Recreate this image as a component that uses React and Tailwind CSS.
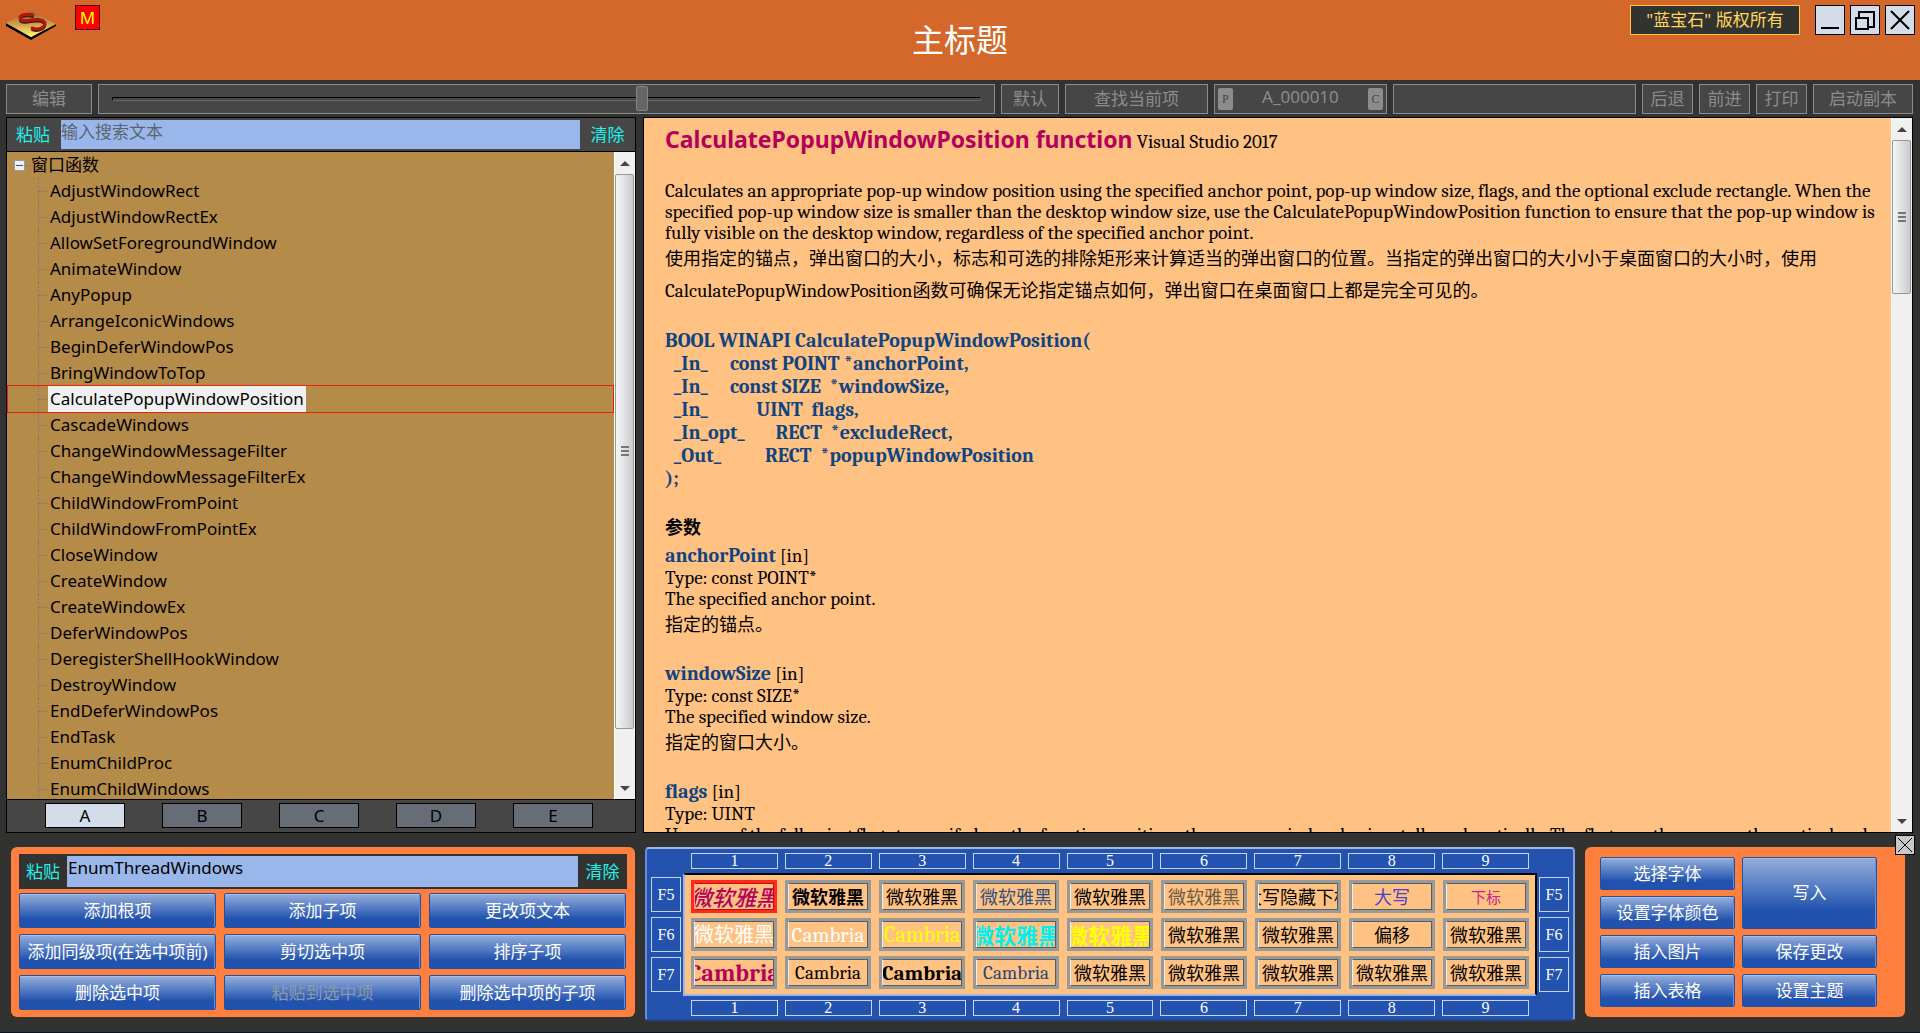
import { useState } from "react";
import clsx from "clsx";

const SANS = "font-['Noto_Sans','Noto_Sans_CJK_SC',sans-serif]";
const SERIF = "font-['Cambria','Caladea','Liberation_Serif','Noto_Sans_CJK_SC',serif]";

const functions = [
  "AdjustWindowRect",
  "AdjustWindowRectEx",
  "AllowSetForegroundWindow",
  "AnimateWindow",
  "AnyPopup",
  "ArrangeIconicWindows",
  "BeginDeferWindowPos",
  "BringWindowToTop",
  "CalculatePopupWindowPosition",
  "CascadeWindows",
  "ChangeWindowMessageFilter",
  "ChangeWindowMessageFilterEx",
  "ChildWindowFromPoint",
  "ChildWindowFromPointEx",
  "CloseWindow",
  "CreateWindow",
  "CreateWindowEx",
  "DeferWindowPos",
  "DeregisterShellHookWindow",
  "DestroyWindow",
  "EndDeferWindowPos",
  "EndTask",
  "EnumChildProc",
  "EnumChildWindows",
];

const code = `BOOL WINAPI CalculatePopupWindowPosition(
  _In_     const POINT *anchorPoint,
  _In_     const SIZE  *windowSize,
  _In_           UINT  flags,
  _In_opt_       RECT  *excludeRect,
  _Out_          RECT  *popupWindowPosition
);`;

const params = [
  { name: "anchorPoint", type: "const POINT*", en: "The specified anchor point.", zh: "指定的锚点。" },
  { name: "windowSize", type: "const SIZE*", en: "The specified window size.", zh: "指定的窗口大小。" },
];

const Y = "微软雅黑";
const styleRows = [
  [
    { t: Y, c: "text-[22px] font-medium italic text-[#b4005a]", active: true },
    { t: Y, c: "font-bold" },
    { t: Y },
    { t: Y, c: "text-[#2f4f7f]" },
    { t: Y },
    { t: Y, c: "text-[#6b5a44]" },
    { t: "大写隐藏下标" },
    { t: "大写", c: "text-[#4a3fd0]" },
    { t: "下标", c: "text-[15px] text-[#d0208c]" },
  ],
  [
    { t: Y, c: "text-[20px] text-white" },
    { t: "Cambria", c: "text-[21px] text-white" },
    { t: "Cambria", c: "text-[22px] text-[#ffff00]" },
    { t: Y, c: "text-[22px] font-bold text-[#00f0f0]" },
    { t: Y, c: "text-[22px] font-bold text-[#ffff00]" },
    { t: Y },
    { t: Y },
    { t: "偏移" },
    { t: Y },
  ],
  [
    { t: "Cambria", c: "text-[24px] font-bold text-[#b4005a]" },
    { t: "Cambria", c: "text-[19px]" },
    { t: "Cambria", c: "text-[21px] font-bold" },
    { t: "Cambria", c: "text-[19px] text-[#1f497d]" },
    { t: Y },
    { t: Y },
    { t: Y },
    { t: Y },
    { t: Y },
  ],
];

const SNAKE = "M27 4 C21 2 13 4 14 7.5 C15 12 24 8 32 8.5 C39 9 41 13 37 16 C34 18 30 18.5 26 17";

const Logo = () => (
  <svg viewBox="0 0 50 30" className="h-[30px] w-[50px]" aria-hidden="true">
    <defs>
      <linearGradient id="gold" x1="0" y1="0" x2="0" y2="1">
        <stop offset="0" stopColor="#8f6a32" />
        <stop offset="0.5" stopColor="#d29c4c" />
        <stop offset="1" stopColor="#ffff6a" />
      </linearGradient>
    </defs>
    <path d="M0 12 L25 26 L50 13 V15 L25 29 L0 15 Z" fill="#000" />
    <path d="M25 0 L50 13 L25 26 L0 12 Z" fill="url(#gold)" />
    <path d={SNAKE} transform="translate(0 2)" fill="none" stroke="#4a1c0a" strokeWidth="2" strokeLinecap="round" />
    <path d={SNAKE} fill="none" stroke="#b3160e" strokeWidth="3" strokeLinecap="round" />
  </svg>
);

const WindowButton = ({ label, children }) => (
  <button aria-label={label} className="size-[30px] border border-black bg-[#d4dbe9]">
    <svg viewBox="0 0 28 28" className="size-7" fill="none" stroke="#000" strokeWidth="2">
      {children}
    </svg>
  </button>
);

const ToolButton = ({ children, className }) => (
  <button
    className={clsx("shrink-0 border border-[#8c8c8c] bg-[#464646] text-[17px] text-[#8c8c8c]", className)}
  >
    {children}
  </button>
);

const ScrollBar = ({ thumb }) => (
  <div className="flex w-[21px] shrink-0 flex-col border-l border-white bg-[#f0f0f0]">
    <button aria-label="向上" className="flex h-[22px] shrink-0 items-center justify-center">
      <svg viewBox="0 0 10 5" className="h-[5px] w-[10px]"><path d="M5 0 L10 5 H0 Z" fill="#444" /></svg>
    </button>
    <div className="min-h-0 flex-1 pr-px">
      <div
        className={clsx(
          "flex flex-col items-center justify-center gap-[2px] rounded-xs border border-[#979797] bg-linear-to-r from-[#f5f5f5] via-[#e0e1e3] to-[#c9cbcf]",
          thumb
        )}
      >
        <i className="h-[2px] w-2 bg-[#777]" />
        <i className="h-[2px] w-2 bg-[#777]" />
        <i className="h-[2px] w-2 bg-[#777]" />
      </div>
    </div>
    <button aria-label="向下" className="flex h-[22px] shrink-0 items-center justify-center">
      <svg viewBox="0 0 10 5" className="h-[5px] w-[10px]"><path d="M5 5 L10 0 H0 Z" fill="#444" /></svg>
    </button>
  </div>
);

const BlueButton = ({ children, className, disabled }) => (
  <button
    disabled={disabled}
    className={clsx(
      "min-w-0 rounded-xs border border-[#2450a0] bg-linear-to-b from-[#8ea8d8] from-5% to-[#2152ae] to-75% text-[17px] whitespace-nowrap shadow-[inset_0_1px_0_#a9bfe6,inset_-1px_0_0_#5f8fdc]",
      disabled ? "text-[#8d97ab]" : "text-white",
      className
    )}
  >
    {children}
  </button>
);

const Header = () => (
  <header className="grid h-20 shrink-0 grid-cols-[1fr_auto_1fr] bg-[#d4682a] px-[5px] pt-[5px]">
    <div className="flex items-start pl-px">
      <div className="pt-[6px]">
        <Logo />
      </div>
      <button className="ml-[19px] h-[25px] w-[25px] border border-[#400] bg-[#ff0000] text-[17px] leading-[23px] text-[#ffff00]">
        M
      </button>
    </div>
    <h1 className="pt-[11px] text-[32px] leading-[48px] text-white">主标题</h1>
    <div className="flex items-start justify-end gap-[5px]">
      <p className="mr-[10px] h-[30px] w-[170px] border border-[#ffc83c] bg-[#323230] text-center text-[17px] leading-7 text-[#ffd75a]">
        "蓝宝石" 版权所有
      </p>
      <WindowButton label="最小化">
        <path d="M5 22 H23" />
      </WindowButton>
      <WindowButton label="还原">
        <path d="M8 11 V6 H23 V21 H18 M5 12 H17 V23 H5 Z" />
      </WindowButton>
      <WindowButton label="关闭">
        <path d="M5 5 L23 23 M23 5 L5 23" />
      </WindowButton>
    </div>
  </header>
);

const Toolbar = () => {
  const [zoom, setZoom] = useState(612);

  return (
    <div className="flex h-[30px] shrink-0 gap-1.5 pr-[7px] pl-1.5">
      <ToolButton className="w-[86px]">编辑</ToolButton>
      <div className="flex min-w-0 flex-[876] items-center border border-[#8c8c8c] bg-[#464646] px-[13px]">
        <input
          type="range"
          aria-label="缩放"
          min="0"
          max="1000"
          value={zoom}
          onChange={(e) => setZoom(e.target.value)}
          className="h-[25px] w-full appearance-none bg-transparent [&::-webkit-slider-runnable-track]:h-1 [&::-webkit-slider-runnable-track]:border [&::-webkit-slider-runnable-track]:border-[#666] [&::-webkit-slider-runnable-track]:border-t-black [&::-webkit-slider-runnable-track]:border-l-black [&::-webkit-slider-thumb]:-mt-3 [&::-webkit-slider-thumb]:h-[25px] [&::-webkit-slider-thumb]:w-3 [&::-webkit-slider-thumb]:appearance-none [&::-webkit-slider-thumb]:rounded-xs [&::-webkit-slider-thumb]:border [&::-webkit-slider-thumb]:border-[#858585] [&::-webkit-slider-thumb]:bg-[#666]"
        />
      </div>
      <ToolButton className="w-[58px]">默认</ToolButton>
      <ToolButton className="w-[143px]">查找当前项</ToolButton>
      <div className="flex w-[173px] shrink-0 items-center justify-between border border-[#8c8c8c] bg-[#464646] px-[3px] text-[#8c8c8c]">
        <button className="h-[22px] w-[15px] rounded-xs bg-[#8c8c8c] font-['Liberation_Serif',serif] text-xs text-[#464646]">
          P
        </button>
        <span className="pb-1 text-[17px] leading-6">A_000010</span>
        <button className="h-[22px] w-[15px] rounded-xs bg-[#8c8c8c] font-['Liberation_Serif',serif] text-xs text-[#464646]">
          C
        </button>
      </div>
      <div className="min-w-0 flex-[243] border border-[#8c8c8c] bg-[#464646]" />
      <ToolButton className="w-[51px]">后退</ToolButton>
      <ToolButton className="w-[51px]">前进</ToolButton>
      <ToolButton className="w-[51px]">打印</ToolButton>
      <ToolButton className="w-[100px]">启动副本</ToolButton>
    </div>
  );
};

const TreePanel = () => {
  const [selected, setSelected] = useState("CalculatePopupWindowPosition");
  const [tab, setTab] = useState("A");

  return (
    <section className="flex min-h-0 flex-col border border-black bg-[#464646]">
      {/* Search */}
      <div className="flex h-[34px] shrink-0 items-center border-b border-black text-[17px] text-[#20f0e8]">
        <button className="w-[54px] shrink-0 pr-[2px]">粘贴</button>
        <input
          aria-label="搜索"
          placeholder="输入搜索文本"
          className="h-[29px] min-w-0 flex-1 bg-[#99b7ea] pb-1.5 text-black placeholder:text-[#5c6470]"
        />
        <button className="w-[55px] shrink-0">清除</button>
      </div>

      {/* Tree */}
      <div className="flex min-h-0 flex-1 bg-[#b58b4a] text-[17px]">
        <ul className="min-w-0 flex-1 overflow-hidden px-px text-black">
          <li>
            <button className="flex h-[26px] items-center pl-[6px]">
              <i className="flex size-[11px] items-center justify-center border border-[#9a9a9a] bg-[#f0f0f0]">
                <i className="h-px w-[7px] bg-[#3050a0]" />
              </i>
              <i className="mr-[2px] w-1 border-t border-dotted border-[#777]" />
              <span>窗口函数</span>
            </button>
            <ul>
              {functions.map((name) => (
                <li key={name}>
                  <button
                    onClick={() => setSelected(name)}
                    className={clsx(
                      "relative flex h-[26px] w-full pl-[30px]",
                      selected === name && "z-10 outline-1 outline-[#e8200a]"
                    )}
                  >
                    <span className="flex h-full w-[10px] items-center border-l border-dotted border-[#777]">
                      <i className="w-2 border-t border-dotted border-[#777]" />
                    </span>
                    <span className={clsx("px-[2px] leading-[26px]", selected === name && "bg-[#f0f0f0]")}>
                      {name}
                    </span>
                  </button>
                </li>
              ))}
            </ul>
          </li>
        </ul>
        <ScrollBar thumb="h-[92%]" />
      </div>

      {/* Pages */}
      <div className="flex h-[33px] shrink-0 justify-between border-t border-black pt-[3px] pr-[42px] pl-[38px]">
        {["A", "B", "C", "D", "E"].map((t) => (
          <button
            key={t}
            onClick={() => setTab(t)}
            className={clsx(
              "h-[25px] w-20 border border-black text-[17px] leading-[23px] text-black",
              tab === t ? "bg-[#d4dbe9]" : "bg-[#666d77]"
            )}
          >
            {t}
          </button>
        ))}
      </div>
    </section>
  );
};

const DocPanel = () => (
  <section className="flex min-h-0 border border-black bg-[#ffc282] text-black">
    <article className={clsx("min-w-0 flex-1 overflow-hidden pr-[10px] pl-[21px] text-[19px] leading-[21px]", SERIF)}>
      <h2 className="mb-[21px] h-[42px] leading-[48px]">
        <span className="font-['Noto_Sans',sans-serif] text-[23px] leading-none font-bold text-[#b4005a]">
          CalculatePopupWindowPosition function
        </span>{" "}
        Visual Studio 2017
      </h2>
      <p>
        Calculates an appropriate pop-up window position using the specified anchor point, pop-up window size, flags,
        and the optional exclude rectangle. When the specified pop-up window size is smaller than the desktop window
        size, use the CalculatePopupWindowPosition function to ensure that the pop-up window is fully visible on the
        desktop window, regardless of the specified anchor point.
      </p>
      <p className="mb-[21px] text-[18px] leading-8">
        使用指定的锚点，弹出窗口的大小，标志和可选的排除矩形来计算适当的弹出窗口的位置。当指定的弹出窗口的大小小于桌面窗口的大小时，使用
        <span className="text-[19px] leading-none">CalculatePopupWindowPosition</span>
        函数可确保无论指定锚点如何，弹出窗口在桌面窗口上都是完全可见的。
      </p>
      <pre className={clsx("mb-[23px] text-[20px] leading-[23px] font-bold text-[#0f4480]", SERIF)}>{code}</pre>
      <h3 className="text-[18px] leading-8 font-bold">参数</h3>
      {params.map((p) => (
        <div key={p.name} className="mb-[21px]">
          <h4 className="leading-[23px]">
            <span className="text-[20px] leading-none font-bold text-[#0f4480]">{p.name}</span> [in]
          </h4>
          <p>Type: {p.type}</p>
          <p>{p.en}</p>
          <p className="text-[18px] leading-8">{p.zh}</p>
        </div>
      ))}
      <h4 className="leading-[23px]">
        <span className="text-[20px] leading-none font-bold text-[#0f4480]">flags</span> [in]
      </h4>
      <p>Type: UINT</p>
      <p>
        Use one of the following flags to specify how the function positions the pop-up window horizontally and
        vertically. The flags are the same as the vertical and
      </p>
    </article>
    <ScrollBar thumb="h-[23%]" />
  </section>
);

const EditPanel = () => {
  const [text, setText] = useState("EnumThreadWindows");

  return (
    <section className="h-[170px] rounded-md bg-[#ff803e] px-2 pt-[7px]">
      <div className="mb-1 flex h-[35px] items-center bg-[#323230] text-[17px] text-[#20f0e8]">
        <button className="w-12 shrink-0">粘贴</button>
        <input
          aria-label="项文本"
          value={text}
          onChange={(e) => setText(e.target.value)}
          className="h-[31px] min-w-0 flex-1 bg-[#99b7ea] pb-[8px] pl-px text-black"
        />
        <button className="w-[49px] shrink-0">清除</button>
      </div>
      <div className="mr-px grid auto-rows-[35px] grid-cols-3 gap-x-2 gap-y-[6px]">
        <BlueButton>添加根项</BlueButton>
        <BlueButton>添加子项</BlueButton>
        <BlueButton>更改项文本</BlueButton>
        <BlueButton>添加同级项(在选中项前)</BlueButton>
        <BlueButton>剪切选中项</BlueButton>
        <BlueButton>排序子项</BlueButton>
        <BlueButton>删除选中项</BlueButton>
        <BlueButton disabled>粘贴到选中项</BlueButton>
        <BlueButton>删除选中项的子项</BlueButton>
      </div>
    </section>
  );
};

const NumberRow = () => (
  <div className="grid grid-cols-9 gap-[7px] px-[44px]">
    {[1, 2, 3, 4, 5, 6, 7, 8, 9].map((n) => (
      <span key={n} className="h-4 border border-[#c5d5f2] text-center leading-[14px]">
        {n}
      </span>
    ))}
  </div>
);

const KeyColumn = () => (
  <div className="flex w-[30px] shrink-0 flex-col justify-center gap-[5px]">
    {["F5", "F6", "F7"].map((k) => (
      <span key={k} className="h-[35px] border border-[#c5d5f2] text-center leading-[33px]">
        {k}
      </span>
    ))}
  </div>
);

const StylePanel = () => (
  <section className="flex flex-col rounded-sm border-2 border-t-[#9db8e8] border-r-[#7fa3e0] border-b-[#1c4896] border-l-[#5f8fdc] bg-[#2353ae] pt-1 font-['Liberation_Serif',serif] text-base text-white">
    <NumberRow />
    <div className="my-1 flex gap-[2px] px-1">
      <KeyColumn />
      <div className="grid min-w-0 flex-1 grid-cols-9 gap-x-2 gap-y-[5px] border-2 border-t-black border-r-black border-b-[#9db8e8] border-l-[#9db8e8] bg-[#ffc282] px-[6px] py-[5px]">
        {styleRows.flat().map((s, i) => (
          <button
            key={i}
            className={clsx(
              "flex h-[33px] min-w-0 justify-center border-[3px] p-0 text-black",
              s.active ? "border-[#ff2a1c]" : "border-[#969a9a]"
            )}
          >
            <span
              className={clsx(
                "flex h-full w-full min-w-0 items-center justify-center overflow-hidden border leading-6 whitespace-nowrap",
                s.active
                  ? "border-[#c01010] border-l-[#ff9a90]"
                  : "border-[#5c5c5c] border-l-[#eee]",
                s.t === "Cambria" ? SERIF : SANS,
                s.c,
                !/text-\[\d/.test(s.c || "") && "text-[18px]"
              )}
            >
              {s.t}
            </span>
          </button>
        ))}
      </div>
      <KeyColumn />
    </div>
    <NumberRow />
  </section>
);

const ActionPanel = () => (
  <section className="relative h-[170px] rounded-md bg-[#ff803e] pt-[10px] pr-7 pl-[15px]">
    <button
      aria-label="关闭面板"
      className="absolute -top-3 -right-[10px] flex size-5 items-center justify-center border border-black bg-[#c8c8c8]"
    >
      <svg viewBox="0 0 16 16" className="size-4" fill="none" stroke="#000">
        <path d="M1 1 L15 15 M15 1 L1 15" />
      </svg>
    </button>
    <div className="grid auto-rows-[33px] grid-cols-2 gap-x-[7px] gap-y-[6px]">
      <BlueButton>选择字体</BlueButton>
      <BlueButton className="row-span-2">写入</BlueButton>
      <BlueButton>设置字体颜色</BlueButton>
      <BlueButton>插入图片</BlueButton>
      <BlueButton>保存更改</BlueButton>
      <BlueButton>插入表格</BlueButton>
      <BlueButton>设置主题</BlueButton>
    </div>
  </section>
);

export default function App() {
  return (
    <div className={clsx("flex h-screen flex-col overflow-hidden bg-[#323230]", SANS)}>
      <Header />
      <div className="h-1 shrink-0" />
      <Toolbar />
      <main className="mt-[3px] grid min-h-0 flex-1 grid-cols-[630fr_1270fr] grid-rows-[minmax(0,1fr)] gap-[7px] pr-[7px] pl-1.5">
        <TreePanel />
        <DocPanel />
      </main>
      <footer className="mt-[14px] grid h-[174px] shrink-0 grid-cols-[624fr_930fr_320fr] gap-[10px] pr-[15px] pl-[11px]">
        <EditPanel />
        <StylePanel />
        <ActionPanel />
      </footer>
      <div className="h-3 shrink-0 border-b border-[#0a1420]" />
    </div>
  );
}
